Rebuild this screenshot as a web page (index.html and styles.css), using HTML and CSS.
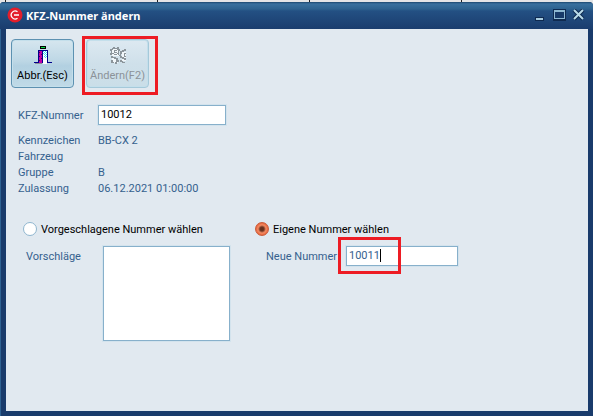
FILE: index.html
```html
<!DOCTYPE html>
<html lang="de">
<head>
    <meta charset="UTF-8">
    <meta name="viewport" content="width=device-width, initial-scale=1.0">
    <title>KFZ-Nummer ändern</title>
    <link rel="stylesheet" href="styles.css">
</head>
<body>
    <div class="window">
        <header class="titlebar">
            <svg class="logo" width="16" height="16" viewBox="0 0 16 16">
                <circle cx="8" cy="8" r="7.5" fill="#e31e2b"/>
                <path d="M10.500 4.700A4 4 0 1 0 10.500 11.300M7 8h5" fill="none" stroke="#fff" stroke-width="1.300"/>
            </svg>
            <h1>KFZ-Nummer ändern</h1>
            <div class="window-buttons">
                <button type="button" aria-label="Minimieren">
                    <svg width="13" height="13" viewBox="0 0 13 13"><path d="M1 8h9v4H1z" fill="#0f2a50"/><path d="M2 9h7v2H2z" fill="#a9cde0"/></svg>
                </button>
                <button type="button" aria-label="Maximieren">
                    <svg width="13" height="13" viewBox="0 0 13 13"><path d="M0 0h13v12H0z" fill="#0f2a50"/><path d="M1 1h11v9H1z" fill="#8db8d2"/><path d="M2 3h9v6H2z" fill="#173a69"/></svg>
                </button>
                <button type="button" aria-label="Schließen">
                    <svg width="13" height="13" viewBox="0 0 13 13"><path d="M2 1l9 9M11 1l-9 9" stroke="#0f2a50" stroke-width="4"/><path d="M2 1l9 9M11 1l-9 9" stroke="#b9dae8" stroke-width="2"/></svg>
                </button>
            </div>
        </header>
        <main>
            <div class="toolbar">
                <button type="button" class="tool">
                    <svg width="20" height="20" viewBox="0 0 20 20" shape-rendering="crispEdges">
                        <path d="M7 1h6v3H7z" fill="#000"/>
                        <path d="M8 2h4v1H8z" fill="#00e040"/>
                        <path d="M5 5h10v12h4v1h-5V6H6v12H1v-1h4z" fill="#00008b"/>
                        <path d="M2 18h7v1H2z" fill="#8a8f98"/>
                        <path d="M6 6h3v12H6z" fill="#c000a8"/>
                        <path d="M6 7h1v1H6zM8 9h1v1H8zM6 11h1v1H6zM8 13h1v1H8zM6 15h1v1H6z" fill="#500050"/>
                        <path d="M9 6h1v12H9z" fill="#00008b"/>
                        <path d="M10 6h4v13h-4z" fill="#fff"/>
                        <path d="M10 6h1v1h-1zM12 6h1v1h-1zM11 7h1v1h-1zM13 7h1v1h-1zM10 8h1v1h-1zM12 8h1v1h-1zM11 9h1v1h-1zM13 9h1v1h-1zM12 10h1v1h-1zM11 11h1v1h-1zM13 11h1v1h-1zM12 12h1v1h-1z" fill="#40e0f0"/>
                    </svg>
                    <span>Abbr.(Esc)</span>
                </button>
                <div class="mark mark-tool">
                    <button type="button" class="tool" disabled>
                        <svg width="20" height="20" viewBox="0 0 20 20" shape-rendering="crispEdges">
                            <path d="M4 4h7v7H4zM14 7h4v9h-4zM4 13h6v5H4z" fill="#f2f7fa"/>
                            <path d="M5 2h2v1h2V2h2v2h1v2h-1v2h1v2h-2V9H9v1H6V9H4v1H2V8h1V6H2V4h2V3h1zM5 4v1H4v3h2v1h3V8h1V5H9V4zM6 5h3v1H6zM6 6h1v1h2v1H6zM16 4h2v2h-2v1h-2v2h-1v2h1v1h2v1h2v2h-2v-1h-2v-1h-2v-2h-1V8h1V6h2V5h2zM16 8h2v1h-1v2h1v1h-2zM3 11h2v1h3v1h2v2h1v2H9v2H7v-2h1v-3H6v-1H3zM3 15h2v2h1v1H3zM12 15h2v1h1v1h2v1h-3v-1h-2z" fill="#8c959b" fill-rule="evenodd"/>
                        </svg>
                        <span>Ändern(F2)</span>
                    </button>
                </div>
            </div>

            <div class="details">
                <label for="kfz">KFZ-Nummer</label>
                <input type="text" id="kfz" class="field kfz" value="10012">
                <span>Kennzeichen</span><span>BB-CX 2</span>
                <span>Fahrzeug</span><span></span>
                <span>Gruppe</span><span>B</span>
                <span>Zulassung</span><span>06.12.2021 01:00:00</span>
            </div>

            <div class="choices">
                <section>
                    <label class="choice"><input type="radio" name="wahl"><span>Vorgeschlagene Nummer wählen</span></label>
                    <div class="row row-list">
                        <label for="liste">Vorschläge</label>
                        <select id="liste" class="field list" size="5"></select>
                    </div>
                </section>
                <section>
                    <label class="choice"><input type="radio" name="wahl" checked><span>Eigene Nummer wählen</span></label>
                    <div class="row">
                        <label for="neu">Neue Nummer</label>
                        <div class="entry">
                            <input type="text" id="neu" class="field" value="10011">
                            <span class="caret"></span>
                            <span class="mark mark-entry"></span>
                        </div>
                    </div>
                </section>
            </div>
        </main>
    </div>
</body>
</html>
```

FILE: styles.css
```css
* {
    box-sizing: border-box;
}
body {
    margin: 0;
    padding-top: 2px;
    min-height: 100vh;
    display: flex;
    /* table lines behind the dialog */
    background: #e4e5e6 repeating-linear-gradient(90deg, transparent 0 5px, #222 5px 6px, transparent 6px 152px);
    font-family: Roboto, "Liberation Sans", sans-serif;
    font-size: 11px;
    line-height: 16px;
    color: #35618e;
}
button, input, select {
    font: inherit;
    color: inherit;
    margin: 0;
}
.window {
    flex: 1;
    display: flex;
    flex-direction: column;
    padding: 0 5px 5px 6px;
    background-color: #193b6b;
    border-radius: 4px 4px 0 0;
    box-shadow: inset 1px 0 #2e6292;
    overflow: hidden;
}
.titlebar {
    display: flex;
    align-items: center;
    height: 27px;
    margin: 0 -5px 0 -6px;
    padding: 0 8px 1px 7px;
    background: linear-gradient(#1c4870 0, #39709e 2px, #2d628f 7px, #235083 9px, #1a3d6e 100%);
}
.logo {
    flex: none;
}
.titlebar h1 {
    flex: 1;
    margin: 0 0 0 3px;
    padding-top: 2px;
    font-family: "Noto Sans", sans-serif;
    font-size: 11px;
    font-weight: bold;
    color: #fff;
}
.window-buttons {
    display: flex;
    gap: 6px;
}
.window-buttons button {
    display: block;
    padding: 0;
    border: 0;
    background: none;
}
.window-buttons svg {
    display: block;
}
main {
    flex: 1;
    padding: 7px 5px;
    background-color: #e1e9f0;
}
.toolbar {
    display: flex;
    gap: 8px;
}
.tool {
    display: flex;
    flex-direction: column;
    align-items: center;
    width: 63px;
    height: 49px;
    margin-top: 3px;
    padding: 5px 0 0;
    gap: 3px;
    border: 1px solid #5d91b1;
    border-radius: 4px;
    background: linear-gradient(#d6e6ef, #bdd7e5 45%, #b2d0e1 55%, #c0dae7);
    box-shadow: inset 0 0 0 1px #c4dfeb;
    color: #000;
}
.tool:disabled {
    margin: 0;
    border-color: #a5c9da;
    background: linear-gradient(#dde9f1, #cfe0ea 50%, #cadee8);
    color: #8b9298;
}
.mark {
    border: 3px solid #ed1c24;
}
.mark-tool {
    width: 76px;
    height: 59px;
    padding-left: 1px;
}
.details {
    display: grid;
    grid-template-columns: 80px 1fr;
    margin: 10px 0 0 7px;
}
.details label {
    padding-top: 3px;
}
.field {
    height: 20px;
    padding: 0 2px 1px;
    border: 1px solid #87b0cb;
    border-radius: 0;
    background-color: #fff;
    box-shadow: 0 0 0 1px #d3e3ed;
    outline: none;
}
.kfz {
    width: 128px;
    margin-bottom: 8px;
    color: #000;
}
.choices {
    display: grid;
    grid-template-columns: 232px 1fr;
    margin: 24px 0 0 12px;
}
.choice {
    display: flex;
    align-items: center;
    gap: 4px;
    height: 16px;
    color: #000;
}
.choice span {
    padding-top: 2px;
}
.choice input {
    appearance: none;
    width: 14px;
    height: 14px;
    border: 1px solid #8fb6cf;
    border-radius: 50%;
    background-color: #fff;
}
.choice input:checked {
    border-color: #c95a38;
    background: radial-gradient(circle, #5f2c1c 0, #6c3421 2px, #f58b63 4px, #e8683f 6px);
}
.row {
    display: flex;
    align-items: flex-start;
    gap: 10px;
    padding: 9px 0 0 11px;
}
.row label {
    width: 70px;
    padding-top: 3px;
    white-space: nowrap;
}
.row-list {
    padding-left: 3px;
    gap: 7px;
}
.list {
    width: 127px;
    height: 95px;
}
.entry {
    position: relative;
}
.entry .field {
    display: block;
    width: 112px;
    color: #35618e;
}
.caret {
    position: absolute;
    top: 3px;
    left: 34px;
    width: 1px;
    height: 13px;
    background-color: #000;
}
.mark-entry {
    position: absolute;
    top: -9px;
    left: -8px;
    width: 63px;
    height: 37px;
    pointer-events: none;
}
```
